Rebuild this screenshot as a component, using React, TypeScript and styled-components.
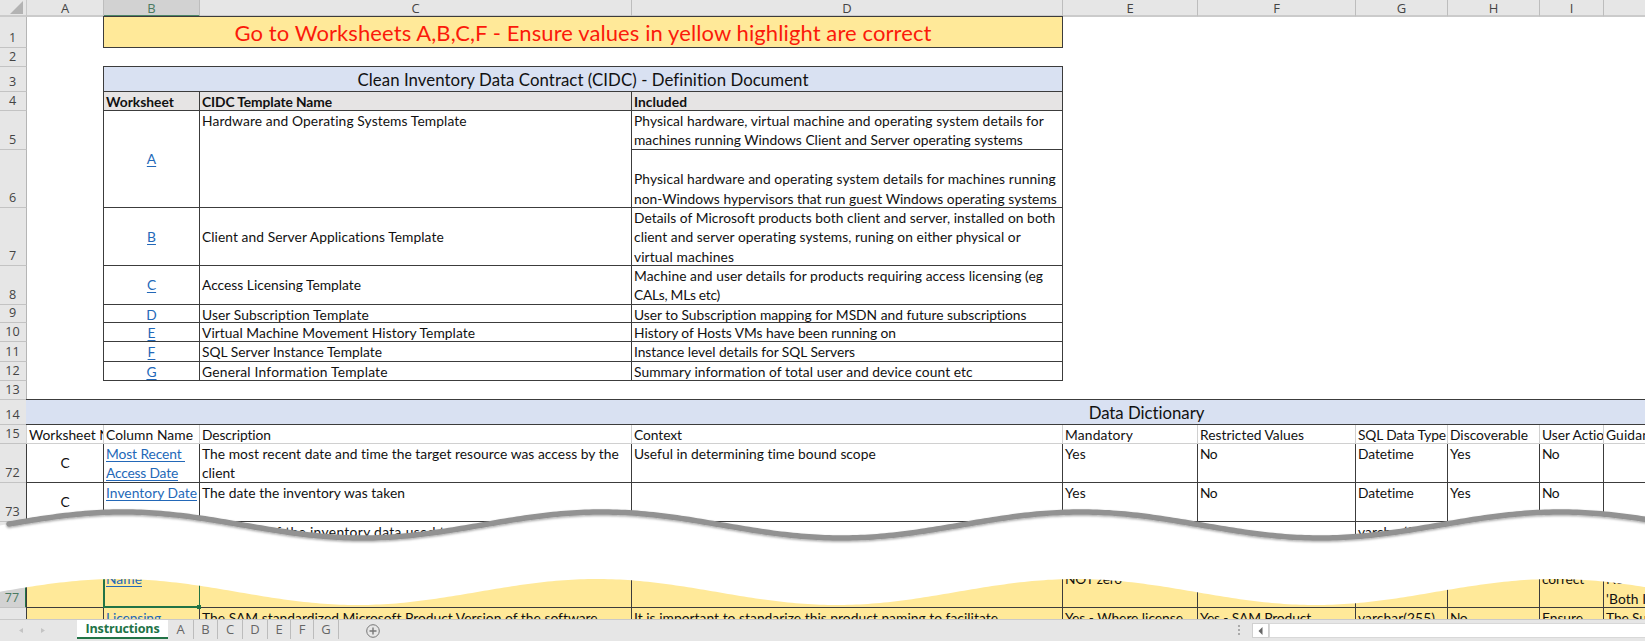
import React, { useLayoutEffect, useRef, useState } from "react";
import styled, { createGlobalStyle, css } from "styled-components";

const GlobalStyle = createGlobalStyle`
  * { box-sizing: border-box; }
  html, body { margin: 0; padding: 0; background: #fff; overflow: hidden; }
`;

const LINE = "#3c3c3c";
const FAINT = "#d0d0d0";
const BLUE = "#d9e1f2";
const YELLOW = "#ffe999";
const GREEN = "#217346";

const COLUMNS = [27, 77, 96, 432, 431, 135, 158, 92, 92, 64, 120];
const LETTERS = ["A", "B", "C", "D", "E", "F", "G", "H", "I"];
const ROWS: [string, number][] = [
  ["1", 31], ["2", 19], ["3", 25], ["4", 19], ["5", 39], ["6", 58], ["7", 58],
  ["8", 39], ["9", 18], ["10", 19], ["11", 20], ["12", 19], ["13", 19],
  ["14", 25], ["15", 19], ["72", 39], ["73", 39], ["", 28], ["77", 58], ["", 12],
];

const Window = styled.div`
  width: 1645px;
  height: 641px;
  overflow: hidden;
  display: flex;
  flex-direction: column;
  background: #fff;
  font-family: Lato, "Liberation Sans", sans-serif;
  font-size: 13.8px;
  line-height: 19.33px;
  color: #111;
`;

const SheetArea = styled.div`
  position: relative;
  height: 619px;
  overflow: hidden;
  flex: none;
`;

const Sheet = styled.div`
  display: grid;
  grid-template-columns: ${COLUMNS.map((c) => c + "px").join(" ")};
  grid-template-rows: 17px ${ROWS.map((r) => r[1] + "px").join(" ")};
`;

const headFont = css`
  font-family: "Open Sans", "Noto Sans", sans-serif;
  font-size: 13px;
  color: #444;
`;

const ColumnHead = styled.div<{ $selected?: boolean }>`
  ${headFont}
  display: flex;
  justify-content: center;
  align-items: center;
  line-height: 16px;
  background: ${(p) => (p.$selected ? "#d2d2d2" : "#e6e6e6")};
  color: ${(p) => (p.$selected ? "#4a7a61" : "#444")};
  border-right: 1px solid #bdbdbd;
  border-bottom: ${(p) => (p.$selected ? `2px solid #4d8567` : "2px solid #cbcbcb")};
`;

const Corner = styled(ColumnHead)`
  justify-content: flex-end;
  padding-right: 2px;
  border-right-color: #c8c8c8;
`;

const RowHead = styled.div<{ $selected?: boolean }>`
  ${headFont}
  font-size: 12.6px;
  display: flex;
  justify-content: center;
  align-items: flex-end;
  line-height: 18px;
  overflow: hidden;
  padding-right: 1px;
  background: ${(p) => (p.$selected ? "#d2d2d2" : "#e6e6e6")};
  color: ${(p) => (p.$selected ? "#4a7a61" : "#444")};
  border-right: ${(p) => (p.$selected ? `2px solid ${GREEN}` : "1px solid #b5b5b5")};
  border-bottom: 1px solid #c3c3c3;
`;

type CellProps = {
  $r: number;
  $c: number;
  $rs?: number;
  $cs?: number;
  $bg?: string;
  $align?: string;
  $v?: string;
  $line?: string;
  $openTop?: boolean;
};

const Cell = styled.div<CellProps>`
  grid-row: ${(p) => p.$r + 1} / span ${(p) => p.$rs ?? 1};
  grid-column: ${(p) => p.$c + 1} / span ${(p) => p.$cs ?? 1};
  margin: ${(p) => (p.$openTop ? "0" : "-1px")} 0 0 -1px;
  border: 1px solid ${(p) => p.$line ?? LINE};
  ${(p) => p.$openTop && "border-top: 0;"}
  background: ${(p) => p.$bg ?? "transparent"};
  padding: 0 0 0 ${(p) => (p.$align === "center" ? 0 : 2)}px;
  display: flex;
  flex-direction: column;
  align-items: ${(p) => p.$align ?? "flex-start"};
  justify-content: ${(p) => p.$v ?? "flex-start"};
  overflow: hidden;
  white-space: pre;
`;

const Banner = styled(Cell)`
  color: #fb1a0a;
  font-size: 22px;
  line-height: 31px;
`;

const Heading = styled(Cell)`
  font-size: 16.8px;
  line-height: 25px;
`;

const DictionaryHeading = styled(Heading)`
  width: 2242px;
  border-left: 0;
`;

const BoldCell = styled(Cell)`
  font-weight: 700;
`;

const Line = styled.span`
  display: block;
  flex: none;
  width: max-content;
`;

const LinkLine = styled(Line)`
  color: #2368b8;
  text-decoration: underline;
  text-underline-offset: 2px;
  text-decoration-thickness: 1px;
`;

const Selection = styled.div`
  grid-row: 20;
  grid-column: 3;
  margin: -1px 0 0 -1px;
  border: 2px solid ${GREEN};
  border-right-width: 1px;
  position: relative;
  z-index: 2;
  &::after {
    content: "";
    position: absolute;
    right: -2px;
    bottom: -3px;
    width: 4px;
    height: 4px;
    background: ${GREEN};
  }
`;

const Tear = styled.svg`
  position: absolute;
  inset: 0;
  z-index: 3;
`;

const Footer = styled.div`
  ${headFont}
  flex: none;
  height: 22px;
  display: flex;
  background: #e6e6e6;
  border-top: 1px solid #c9c9c9;
  color: #666;
`;

const Arrows = styled.div`
  width: 77px;
  height: 21px;
  flex: none;
`;

const ActiveTab = styled.div`
  width: 91px;
  height: 19px;
  background: #fff;
  border-bottom: 2px solid ${GREEN};
  color: ${GREEN};
  font-weight: 700;
  font-size: 12.6px;
  line-height: 18px;
  display: flex;
  justify-content: center;
`;

const Tab = styled.div<{ $w: number }>`
  width: ${(p) => p.$w}px;
  height: 19px;
  border-right: 1px solid #bcbcbc;
  display: flex;
  justify-content: center;
  line-height: 18px;
`;

const AddSheet = styled.svg`
  margin-left: 26px;
`;

const Scroll = styled.div`
  margin-left: auto;
  width: 412px;
  display: flex;
  align-items: flex-start;
  padding-top: 3px;
`;

const Grip = styled.div`
  width: 2px;
  height: 12px;
  margin: 2px 12px 0 5px;
  background: repeating-linear-gradient(#aaa 0 2px, transparent 2px 4px);
`;

const ScrollButton = styled.div`
  width: 17px;
  height: 15px;
  background: #fff;
  border: 1px solid #d0d0d0;
  display: flex;
  align-items: center;
  justify-content: center;
`;

const Track = styled.div`
  flex: 1;
  height: 15px;
  background: #fff;
  border: 1px solid #d8d8d8;
  border-right: 0;
`;

type TextProps = { children: string; w?: number; link?: boolean };

/* A line of text whose tracking is set so that it takes the given width. */
function Text({ children, w, link }: TextProps) {
  const ref = useRef<HTMLSpanElement>(null);
  const [spacing, setSpacing] = useState(0);
  useLayoutEffect(() => {
    if (!w || !ref.current) return;
    ref.current.style.letterSpacing = "0px";
    const natural = ref.current.getBoundingClientRect().width;
    setSpacing((w + 1 - natural) / children.length);
  }, [w, children]);
  const Tag = link ? LinkLine : Line;
  return (
    <Tag ref={ref} style={{ letterSpacing: spacing }}>
      {children}
    </Tag>
  );
}

type Entry = [string, number];
const TEMPLATES: { row: number; id: string; name: Entry; details: Entry[] }[] = [
  { row: 7, id: "B", name: ["Client and Server Applications Template", 241], details: [["Details of Microsoft products both client and server, installed on both", 420], ["client and server operating systems, runing on either physical or", 386], ["virtual machines", 99]] },
  { row: 8, id: "C", name: ["Access Licensing Template", 158], details: [["Machine and user details for products requiring access licensing (eg", 408], ["CALs, MLs etc)", 85]] },
  { row: 9, id: "D", name: ["User Subscription Template", 166], details: [["User to Subscription mapping for MSDN and future subscriptions", 392]] },
  { row: 10, id: "E", name: ["Virtual Machine Movement History Template", 272], details: [["History of Hosts VMs have been running on", 261]] },
  { row: 11, id: "F", name: ["SQL Server Instance Template", 179], details: [["Instance level details for SQL Servers", 220]] },
  { row: 12, id: "G", name: ["General Information Template", 185], details: [["Summary information of total user and device count etc", 338]] },
];

const DICTIONARY_HEAD: Entry[] = [
  ["Worksheet Name", 105], ["Column Name", 86], ["Description", 68], ["Context", 47],
  ["Mandatory", 67], ["Restricted Values", 103], ["SQL Data Type", 87],
  ["Discoverable", 77], ["User Action", 69], ["Guidance", 57],
];

const DICTIONARY: { row: number; bg?: string; cells: Entry[][] }[] = [
  { row: 16, cells: [[["C", 0]], [["Most Recent ", 78], ["Access Date", 71]], [["The most recent date and time the target resource was access by the", 416], ["client", 32]], [["Useful in determining time bound scope", 241]], [["Yes", 20]], [["No", 16]], [["Datetime", 55]], [["Yes", 20]], [["No", 16]], []] },
  { row: 17, cells: [[["C", 0]], [["Inventory Date", 90]], [["The date the inventory was taken", 202]], [], [["Yes", 20]], [["No", 16]], [["Datetime", 55]], [["Yes", 20]], [["No", 16]], []] },
  { row: 18, cells: [[], [], [["The name of the inventory data used to", 250]], [], [], [], [["varchar(255)", 76]], [], [], []] },
  { row: 19, bg: YELLOW, cells: [[], [[" ", 0], ["Name", 35]], [], [], [[" ", 0], ["NOT zero", 56]], [], [], [], [[" ", 0], ["correct", 41]], [[" ", 0], ["No -", 24], ["'Both In", 47]]] },
  { row: 20, bg: YELLOW, cells: [[], [["Licensing", 54]], [["The SAM standardized Microsoft Product Version of the software", 394]], [["It is important to standarize this product naming to facilitate", 363]], [["Yes - Where license", 117]], [["Yes - SAM Product", 110]], [["varchar(255)", 76]], [["No", 16]], [["Ensure", 40]], [["The Sum", 51]]] },
];

const TABS: Entry[] = [["A", 26], ["B", 24], ["C", 25], ["D", 25], ["E", 23], ["F", 23], ["G", 25]];

const wave = (from: number, mid: number, crest: number) => {
  const points: string[] = [];
  for (let x = from; x <= 1652; x += 4) {
    const y = mid - 13 * Math.cos(((x - crest) / 479) * 2 * Math.PI);
    points.push(`${x} ${y.toFixed(2)}`);
  }
  return points;
};

function TornEdge() {
  const upper = wave(9, 525, 123);
  const fill = wave(0, 525, 123);
  const lower = wave(0, 592, 118);
  return (
    <Tear width="1645" height="619" viewBox="0 0 1645 619">
      <defs>
        <filter id="shade" x="-2%" y="-50%" width="104%" height="220%">
          <feDropShadow dx="0" dy="1.2" stdDeviation="0.9" floodColor="#000" floodOpacity="0.35" />
        </filter>
      </defs>
      <path d={`M${fill.join("L")}L${lower.reverse().join("L")}Z`} fill="#fff" />
      <path d={`M${upper.join("L")}`} fill="none" stroke="#929292" strokeWidth="5.5" strokeLinecap="round" filter="url(#shade)" />
    </Tear>
  );
}

export default function App() {
  return (
    <Window>
      <GlobalStyle />
      <SheetArea>
        <Sheet>
          <Corner>
            <svg width="14" height="14" viewBox="0 0 14 14">
              <path d="M13 0V13H0Z" fill="#b3b3b3" />
            </svg>
          </Corner>
          {LETTERS.map((l) => (
            <ColumnHead key={l} $selected={l === "B"}>{l}</ColumnHead>
          ))}
          <ColumnHead />
          {ROWS.map(([label], i) => (
            <RowHead key={i} $selected={label === "77"} style={{ gridRow: i + 2, gridColumn: 1 }}>
              {label}
            </RowHead>
          ))}

          <Banner $r={1} $c={2} $cs={3} $bg={YELLOW} $align="center">
            <Text w={696}>Go to Worksheets A,B,C,F - Ensure values in yellow highlight are correct</Text>
          </Banner>
          <Heading $r={3} $c={2} $cs={3} $bg={BLUE} $align="center">
            <Text w={450}>Clean Inventory Data Contract (CIDC) - Definition Document</Text>
          </Heading>
          <BoldCell $r={4} $c={2} $bg="#e6e4e4"><Text w={67}>Worksheet</Text></BoldCell>
          <BoldCell $r={4} $c={3} $bg="#e6e4e4"><Text w={129}>CIDC Template Name</Text></BoldCell>
          <BoldCell $r={4} $c={4} $bg="#e6e4e4"><Text w={52}>Included</Text></BoldCell>

          <Cell $r={5} $c={2} $rs={2} $align="center" $v="center"><Text link>A</Text></Cell>
          <Cell $r={5} $c={3} $rs={2}><Text w={264}>Hardware and Operating Systems Template</Text></Cell>
          <Cell $r={5} $c={4}>
            <Text w={409}>Physical hardware, virtual machine and operating system details for</Text>
            <Text w={388}>machines running Windows Client and Server operating systems</Text>
          </Cell>
          <Cell $r={6} $c={4}>
            <Text>{" "}</Text>
            <Text w={421}>Physical hardware and operating system details for machines running</Text>
            <Text w={422}>non-Windows hypervisors that run guest Windows operating systems</Text>
          </Cell>

          {TEMPLATES.map((t) => (
            <React.Fragment key={t.id}>
              <Cell $r={t.row} $c={2} $align="center" $v={t.row < 9 ? "center" : "flex-start"}>
                <Text link>{t.id}</Text>
              </Cell>
              <Cell $r={t.row} $c={3} $v={t.row < 9 ? "center" : "flex-start"}>
                <Text w={t.name[1]}>{t.name[0]}</Text>
              </Cell>
              <Cell $r={t.row} $c={4}>
                {t.details.map(([s, w]) => <Text key={s} w={w}>{s}</Text>)}
              </Cell>
            </React.Fragment>
          ))}

          {DICTIONARY_HEAD.map(([s, w], i) => (
            <Cell key={s} $r={15} $c={i + 1} $line={FAINT}><Text w={w}>{s}</Text></Cell>
          ))}
          <DictionaryHeading $r={14} $c={1} $cs={10} $bg={BLUE} $align="center">
            <Text w={115}>Data Dictionary</Text>
          </DictionaryHeading>

          {DICTIONARY.map((d) =>
            d.cells.map((lines, i) => (
              <Cell
                key={`${d.row}-${i}`}
                $r={d.row}
                $c={i + 1}
                $bg={d.bg}
                $openTop={d.row === 16}
                $align={i === 0 ? "center" : undefined}
                $v={i === 0 ? "center" : undefined}
              >
                {lines.map(([s, w], k) => (
                  <Text key={k} w={w} link={i === 1 && s !== " "}>{s}</Text>
                ))}
              </Cell>
            ))
          )}
          <Selection />
        </Sheet>
        <TornEdge />
      </SheetArea>

      <Footer>
        <Arrows>
          <svg width="77" height="21" viewBox="0 0 77 21">
            <path d="M23 8v5l-4-2.5ZM41 8v5l4-2.5Z" fill="#c4c4c4" />
          </svg>
        </Arrows>
        <ActiveTab><Text w={73}>Instructions</Text></ActiveTab>
        {TABS.map(([l, w]) => <Tab key={l} $w={w}>{l}</Tab>)}
        <AddSheet width="16" height="21" viewBox="0 0 16 21">
          <circle cx="8" cy="11" r="6.3" fill="none" stroke="#777" />
          <path d="M8 7.5v7M4.5 11h7" stroke="#777" strokeWidth="1.4" />
        </AddSheet>
        <Scroll>
          <Grip />
          <ScrollButton>
            <svg width="5" height="8" viewBox="0 0 5 8"><path d="M4.5 0v8L0.5 4Z" fill="#666" /></svg>
          </ScrollButton>
          <Track />
        </Scroll>
      </Footer>
    </Window>
  );
}
